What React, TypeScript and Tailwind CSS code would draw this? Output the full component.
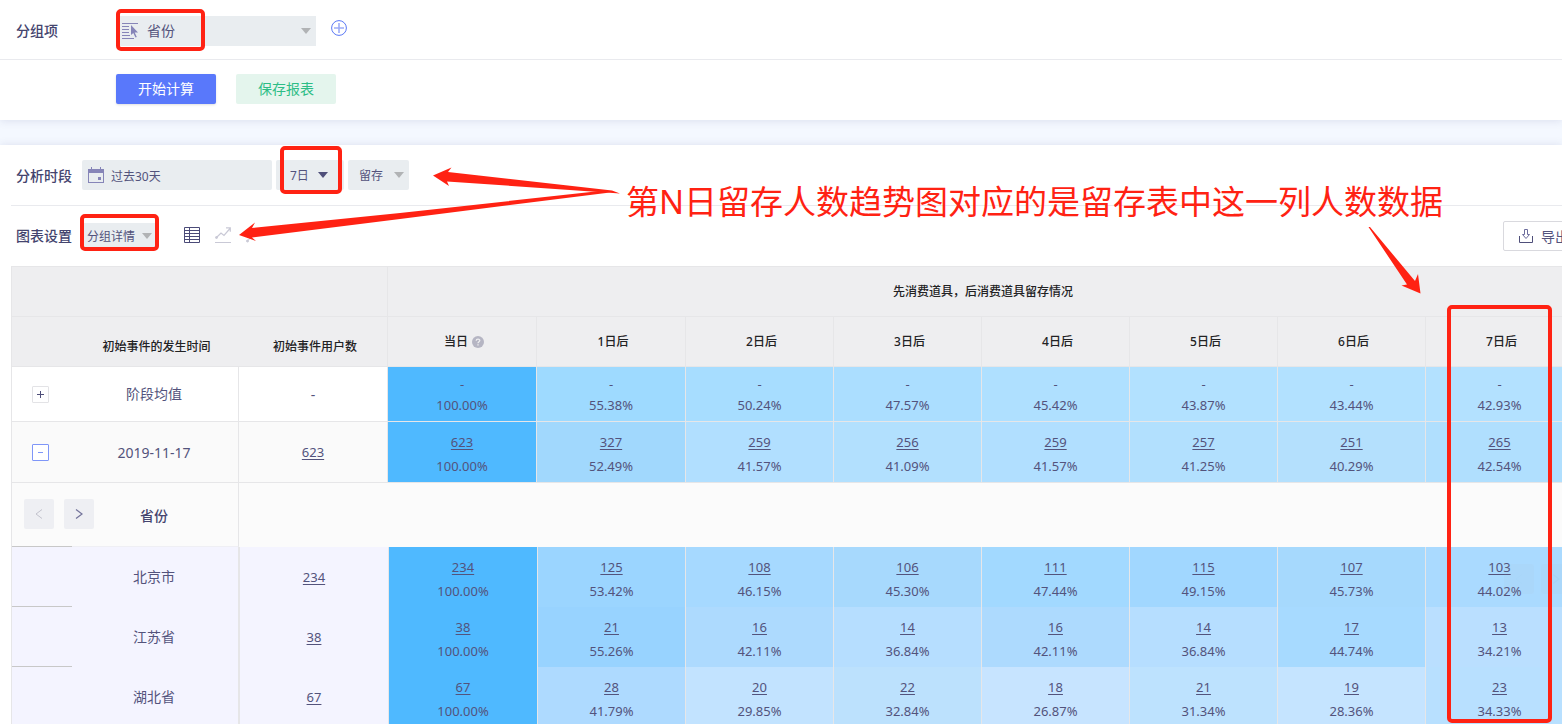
import type { ReactNode } from "react";

type Cell = { n: string; p: string; bg: string };

const days = ["1日后", "2日后", "3日后", "4日后", "5日后", "6日后", "7日后"];

const average: Cell[] = [
  { n: "-", p: "100.00%", bg: "bg-[#4fb9ff]" },
  { n: "-", p: "55.38%", bg: "bg-[#9edaff]" },
  { n: "-", p: "50.24%", bg: "bg-[#a7ddff]" },
  { n: "-", p: "47.57%", bg: "bg-[#abdeff]" },
  { n: "-", p: "45.42%", bg: "bg-[#afe0ff]" },
  { n: "-", p: "43.87%", bg: "bg-[#b2e1ff]" },
  { n: "-", p: "43.44%", bg: "bg-[#b2e1ff]" },
  { n: "-", p: "42.93%", bg: "bg-[#b3e1ff]" },
];

const daily: Cell[] = [
  { n: "623", p: "100.00%", bg: "bg-[#4fb9ff]" },
  { n: "327", p: "52.49%", bg: "bg-[#a1d8fd]" },
  { n: "259", p: "41.57%", bg: "bg-[#b1dfff]" },
  { n: "256", p: "41.09%", bg: "bg-[#b2e0fe]" },
  { n: "259", p: "41.57%", bg: "bg-[#b1dfff]" },
  { n: "257", p: "41.25%", bg: "bg-[#b2e0fe]" },
  { n: "251", p: "40.29%", bg: "bg-[#b4e0fd]" },
  { n: "265", p: "42.54%", bg: "bg-[#b0dffe]" },
];

const provinces: { name: string; users: string; cells: Cell[] }[] = [
  {
    name: "北京市",
    users: "234",
    cells: [
      { n: "234", p: "100.00%", bg: "bg-[#4fb9ff]" },
      { n: "125", p: "53.42%", bg: "bg-[#9bd5ff]" },
      { n: "108", p: "46.15%", bg: "bg-[#a6d9ff]" },
      { n: "106", p: "45.30%", bg: "bg-[#a7d9fd]" },
      { n: "111", p: "47.44%", bg: "bg-[#a2d9ff]" },
      { n: "115", p: "49.15%", bg: "bg-[#a1d7ff]" },
      { n: "107", p: "45.73%", bg: "bg-[#a6d9fd]" },
      { n: "103", p: "44.02%", bg: "bg-[#aadaff]" },
    ],
  },
  {
    name: "江苏省",
    users: "38",
    cells: [
      { n: "38", p: "100.00%", bg: "bg-[#4fb9ff]" },
      { n: "21", p: "55.26%", bg: "bg-[#98d3ff]" },
      { n: "16", p: "42.11%", bg: "bg-[#addafe]" },
      { n: "14", p: "36.84%", bg: "bg-[#b6deff]" },
      { n: "16", p: "42.11%", bg: "bg-[#addafe]" },
      { n: "14", p: "36.84%", bg: "bg-[#b6deff]" },
      { n: "17", p: "44.74%", bg: "bg-[#a7daff]" },
      { n: "13", p: "34.21%", bg: "bg-[#badfff]" },
    ],
  },
  {
    name: "湖北省",
    users: "67",
    cells: [
      { n: "67", p: "100.00%", bg: "bg-[#4fb9ff]" },
      { n: "28", p: "41.79%", bg: "bg-[#aedaff]" },
      { n: "20", p: "29.85%", bg: "bg-[#c2e3ff]" },
      { n: "22", p: "32.84%", bg: "bg-[#bce1fd]" },
      { n: "18", p: "26.87%", bg: "bg-[#c7e4ff]" },
      { n: "21", p: "31.34%", bg: "bg-[#bde2fe]" },
      { n: "19", p: "28.36%", bg: "bg-[#c5e4ff]" },
      { n: "23", p: "34.33%", bg: "bg-[#b8e0ff]" },
    ],
  },
];

const line = "border-[#e6e6e8]";

function Caret({ className }: { className: string }) {
  return (
    <svg viewBox="0 0 10 6" className={`pointer-events-none absolute h-[6px] w-[10px] ${className}`} aria-hidden="true">
      <path d="M0 0h10L5 6z" fill="currentColor" />
    </svg>
  );
}

function Num({ children }: { children: string }) {
  return (
    <a href="#users" className="text-[13px] underline underline-offset-2">
      {children}
    </a>
  );
}

function HeadCell({ children }: { children: ReactNode }) {
  return <th className={`border-r border-b ${line} pl-1 font-medium`}>{children}</th>;
}

function CalendarIcon() {
  return (
    <svg viewBox="0 0 16 16" className="pointer-events-none absolute left-[6px] h-4 w-4" aria-hidden="true">
      <path d="M0 2h16v14H0zM1 6v9h14V6z" fill="#8685b8" fillRule="evenodd" />
      <path d="M3.500 0v3M12.500 0v3" stroke="#8685b8" />
      <path d="M10 10h3v3h-3z" fill="#8685b8" />
    </svg>
  );
}

function PickIcon() {
  return (
    <svg viewBox="0 0 16 16" className="pointer-events-none absolute left-[6px] h-4 w-4" fill="none" aria-hidden="true">
      <path d="M0 .5h16M0 3.500h7M0 6.500h7M0 9.500h7M0 12.500h8M0 15.500h12" stroke="#8685b8" />
      <path d="M9 2v10l2.300-2 2.200 4.600 1.300-.6-2.100-4.500H16z" fill="#8685b8" />
    </svg>
  );
}

function PagerArrows({ faint }: { faint?: boolean }) {
  const button = "flex h-[30px] w-[30px] shrink-0 items-center justify-center rounded-[2px] bg-[#eeeff3]";
  return (
    <>
      <button type="button" aria-label="上一页" disabled={faint} className={button}>
        <svg viewBox="0 0 8 10" className="h-[10px] w-2" fill="none" stroke="#c2c2cc" aria-hidden="true">
          <path d="M7 .5L1 5l6 4.500" />
        </svg>
      </button>
      <button type="button" aria-label="下一页" disabled={faint} className={button}>
        <svg viewBox="0 0 8 10" className="h-[10px] w-2" fill="none" stroke="#73739a" strokeWidth="1.200" aria-hidden="true">
          <path d="M1 .5L7 5 1 9.500" />
        </svg>
      </button>
    </>
  );
}

function Annotations() {
  const box = "absolute rounded-[5px] border-4 border-[#ff2213]";
  return (
    <div className="pointer-events-none absolute inset-0">
      <div className={`${box} left-[116px] top-[9px] h-[42px] w-[89px]`} />
      <div className={`${box} left-[280px] top-[146px] h-[48px] w-[62px]`} />
      <div className={`${box} left-[80px] top-[214px] h-[37px] w-[79px]`} />
      <div className={`${box} left-[1447px] top-[305px] h-[418px] w-[105px]`} />
      <svg viewBox="0 0 1562 724" className="absolute left-0 top-0 h-[724px] w-[1562px]" fill="#ff2213" aria-hidden="true">
        <path d="M433 175.500L451.500 167.500L448 172L612 190.500L620 193.500L606 192.500L447 181.500L449 186z" />
        <path d="M239 235L255 222.500L252 228L400 213L600 191L614 191L606 193L400 219L252 237.500L256 241z" />
        <path d="M1368.500 227L1370 227L1415 281L1418 274L1420.500 293.500L1401.500 285.500L1407 284.500z" />
      </svg>
      <p className="absolute left-[626px] top-[178px] whitespace-nowrap text-[33px] leading-[48px] text-[#ff2213]">
        第N日留存人数趋势图对应的是留存表中这一列人数数据
      </p>
    </div>
  );
}

export default function App() {
  const select = "appearance-none bg-[#e9edf0] outline-none";
  return (
    <div className="relative h-screen overflow-hidden bg-[#f4f8ff] font-['Noto_Sans','Noto_Sans_CJK_SC',sans-serif] text-[14px] text-[#53537c]">
      <section className="bg-white shadow-[0_1px_8px_rgba(80,90,140,0.15)]">
        <div className="flex h-[60px] items-center border-b border-[#e9eaee] pt-[2px] pl-4">
          <label htmlFor="group" className="w-[100px] font-medium text-[#44446e]">
            分组项
          </label>
          <div className="relative flex items-center">
            <select id="group" className={`${select} h-[30px] w-[200px] pl-[31px]`}>
              <option>省份</option>
            </select>
            <PickIcon />
            <Caret className="right-[5px] text-[#b1b3b5]" />
          </div>
          <button type="button" aria-label="添加分组项" className="mb-[6px] ml-[15px]">
            <svg viewBox="0 0 16 16" className="h-4 w-4" fill="none" aria-hidden="true">
              <circle cx="8" cy="8" r="7.400" stroke="#5a78f5" />
              <path d="M8 3v10M3 8h10" stroke="#9dacf8" strokeWidth="1.600" />
            </svg>
          </button>
        </div>
        <div className="flex h-[60px] items-center gap-5 pb-[2px] pl-[116px]">
          <button type="button" className="h-[30px] w-[100px] rounded-[2px] bg-[#5978fb] pb-[2px] text-white shadow-sm">
            开始计算
          </button>
          <button type="button" className="h-[30px] w-[100px] rounded-[2px] bg-[#e4f5ed] pb-[2px] text-[#2dbd86]">
            保存报表
          </button>
        </div>
      </section>

      <main className="mt-[25px] bg-white shadow-[0_0_8px_rgba(80,90,140,0.15)]">
        <div className="ml-[11px] flex h-[61px] items-center border-b border-[#e9eaee] pl-[5px]">
          <label htmlFor="period" className="w-[66px] font-medium text-[#44446e]">
            分析时段
          </label>
          <div className="relative flex items-center">
            <input
              id="period"
              readOnly
              value="过去30天"
              className="h-[30px] w-[190px] rounded-[2px] bg-[#e9edf0] pt-[2px] pl-[29px] text-[12px] outline-none"
            />
            <CalendarIcon />
          </div>
          <div className="relative ml-1 flex items-center">
            <select aria-label="留存天数" className={`${select} h-[30px] w-[68px] rounded-[2px] pt-[2px] pl-[14px] text-[12px]`}>
              <option>7日</option>
            </select>
            <Caret className="right-4 text-[#4f4f7a]" />
          </div>
          <div className="relative ml-1 flex items-center">
            <select aria-label="指标类型" className={`${select} h-[30px] w-[61px] rounded-[2px] pt-[2px] pl-[11px] text-[12px]`}>
              <option>留存</option>
            </select>
            <Caret className="right-[5px] text-[#b1b3b5]" />
          </div>
        </div>

        <div className="flex h-[60px] items-center pb-[2px] pl-4">
          <label htmlFor="chart" className="w-[66px] font-medium text-[#44446e]">
            图表设置
          </label>
          <div className="relative flex items-center pt-[2px]">
            <select id="chart" className={`${select} h-[26px] w-[75px] pt-[2px] pl-[5px] text-[12px]`}>
              <option>分组详情</option>
            </select>
            <Caret className="right-[5px] text-[#b1b3b5]" />
          </div>
          <div className="ml-[27px] flex gap-[15px]">
            <button type="button" aria-label="表格">
              <svg viewBox="0 0 16 16" className="h-4 w-4" fill="none" stroke="#4b4b78" aria-hidden="true">
                <path d="M.5.5h15v15H.5zM.5 3.500h15M.5 6.500h15M.5 9.500h15M.5 12.500h15M5.500.5v15" />
              </svg>
            </button>
            <button type="button" aria-label="折线图">
              <svg viewBox="0 0 16 16" className="h-4 w-4" fill="none" stroke="#c9c9d6" aria-hidden="true">
                <path d="M0 15.500h16" />
                <path d="M1.500 10.500L6 6l3 2.500 6-7M11 .8h4.300v4" strokeWidth="1.200" />
                <circle cx="1.500" cy="10.500" r="1" fill="#c9c9d6" />
              </svg>
            </button>
            <button type="button" aria-label="趋势图">
              <svg viewBox="0 0 16 16" className="h-4 w-4" fill="#c9c9d6" stroke="#c9c9d6" aria-hidden="true">
                <circle cx="1.500" cy="14" r="1" />
                <path d="M2 13.500L5 10" />
              </svg>
            </button>
          </div>
          <button
            type="button"
            className="mt-[2px] -mr-6 ml-auto flex h-[30px] w-[83px] shrink-0 items-center gap-2 rounded-[2px] border border-[#d9d9de] pl-[15px] whitespace-nowrap"
          >
            <svg viewBox="0 0 14 14" className="h-[14px] w-[14px] shrink-0" fill="none" stroke="#6c6c9c" aria-hidden="true">
              <path d="M.5 7v6.500h13V7" stroke="#4f4f7a" />
              <path d="M5.500.5h3v5h2L7 9.500 3.500 5.500h2z" />
            </svg>
            导出
          </button>
        </div>

        <div className={`ml-[11px] overflow-hidden border-t border-l ${line}`}>
          <table className="w-[1562px] table-fixed border-separate border-spacing-0 text-center">
            <colgroup>
              <col className="w-[60px]" />
              <col className="w-[167px]" />
              <col className="w-[149px]" />
              <col className="w-[149px]" />
              <col className="w-[149px]" />
              <col span={6} className="w-[148px]" />
            </colgroup>
            <thead className="bg-[#eeeef0] text-[12px] text-[#222224]">
              <tr className="h-[50px]">
                <td colSpan={3} className={`border-r border-b ${line}`} />
                <th colSpan={8} className={`border-b ${line} pl-1 font-medium`}>
                  先消费道具，后消费道具留存情况
                </th>
              </tr>
              <tr className="h-[50px]">
                <td className={`border-b ${line}`} />
                <th className={`border-b ${line} pt-[10px] pl-[2px] font-medium`}>初始事件的发生时间</th>
                <th className={`border-r border-b ${line} pt-[10px] pl-1 font-medium`}>初始事件用户数</th>
                <HeadCell>
                  <span className="inline-flex items-center gap-1">
                    当日
                    <svg viewBox="0 0 12 12" className="h-3 w-3" fill="none" role="img" aria-label="说明">
                      <circle cx="6" cy="6" r="6" fill="#b5b5c3" />
                      <path d="M4.200 4.700C4.200 2.500 7.800 2.500 7.800 4.600 7.800 5.800 6 5.800 6 7.300M6 8.300v1.300" stroke="#eeeef0" strokeWidth="1.300" />
                    </svg>
                  </span>
                </HeadCell>
                {days.map((d) => (
                  <HeadCell key={d}>{d}</HeadCell>
                ))}
              </tr>
            </thead>
            <tbody>
              <tr className="h-[55px]">
                <td className={`border-b ${line} pr-[3px] pb-[2px]`}>
                  <button type="button" aria-label="展开" className="inline-flex h-[17px] w-[17px] items-center justify-center rounded-[1px] border border-[#e3e3e6] align-middle">
                    <svg viewBox="0 0 7 7" className="h-[7px] w-[7px]" stroke="#4f4f7a" aria-hidden="true">
                      <path d="M3.500 0v7M0 3.500h7" />
                    </svg>
                  </button>
                </td>
                <td className={`border-r border-b ${line} pr-[2px] pb-[2px]`}>阶段均值</td>
                <td className={`border-r border-b ${line}`}>-</td>
                {average.map((c, i) => (
                  <td key={i} className={`border-r border-b ${line} ${c.bg} pt-[2px] text-[13px] leading-[21px]`}>
                    <div>{c.n}</div>
                    <div>{c.p}</div>
                  </td>
                ))}
              </tr>
              <tr className="h-[61px] bg-[#fafafa]">
                <td className={`border-b ${line} pr-[3px] pb-[2px]`}>
                  <button type="button" aria-label="收起" className="inline-flex h-[17px] w-[17px] items-center justify-center rounded-[1px] border border-[#7f96f8] bg-white align-middle">
                    <svg viewBox="0 0 5 1" className="h-px w-[5px]" aria-hidden="true">
                      <path d="M0 0h5v1H0z" fill="#7f96f8" />
                    </svg>
                  </button>
                </td>
                <td className={`border-r border-b ${line} pr-[2px]`}>2019-11-17</td>
                <td className={`border-r border-b ${line}`}>
                  <Num>623</Num>
                </td>
                {daily.map((c, i) => (
                  <td key={i} className={`border-r border-b ${line} ${c.bg} pt-1 text-[13px] leading-6`}>
                    <div>
                      <Num>{c.n}</Num>
                    </div>
                    <div>{c.p}</div>
                  </td>
                ))}
              </tr>
              <tr className="h-[64px] bg-[#fbfbfb]">
                <td className="border-b border-[#c8c8c8] pb-[2px]">
                  <div className="flex gap-[10px] pl-3">
                    <PagerArrows />
                  </div>
                </td>
                <td className="border-r border-b border-r-[#e6e6e8] border-b-[#efeff4] pt-[2px] pr-[2px] font-medium text-[#44446e]">
                  省份
                </td>
                <td colSpan={9} />
              </tr>
              {provinces.map((row) => (
                <tr key={row.name} className="h-[60px] bg-[#f4f4ff]">
                  <td className="border-b border-[#c8c8c8]" />
                  <td className={`border-r ${line} pr-[2px] pb-[2px]`}>{row.name}</td>
                  <td className={`border-l ${line}`}>
                    <Num>{row.users}</Num>
                  </td>
                  {row.cells.map((c, i) => (
                    <td
                      key={i}
                      className={`${i < 2 ? "border-l" : ""} ${i > 0 ? "border-r" : ""} ${line} ${c.bg} pt-1 text-[13px] leading-6`}
                    >
                      <div>
                        <Num>{c.n}</Num>
                      </div>
                      <div>{c.p}</div>
                    </td>
                  ))}
                </tr>
              ))}
            </tbody>
          </table>
        </div>
      </main>
      <div className="absolute top-[564px] right-[-9px] flex gap-[7px] opacity-5 grayscale brightness-75">
        <PagerArrows faint />
      </div>
      <Annotations />
    </div>
  );
}
